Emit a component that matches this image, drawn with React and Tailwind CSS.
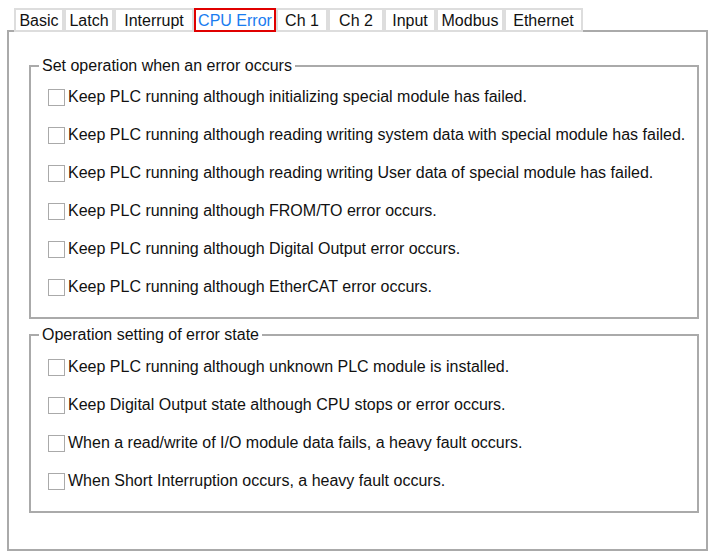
import React from 'react';

const tabs = [
  { name: 'Basic', w: 'w-[50px]' },
  { name: 'Latch', w: 'w-[50px]' },
  { name: 'Interrupt', w: 'w-[80px]' },
  { name: 'CPU Error', w: 'w-[82px]', active: true },
  { name: 'Ch 1', w: 'w-[52px]' },
  { name: 'Ch 2', w: 'w-[56px]' },
  { name: 'Input', w: 'w-[52px]' },
  { name: 'Modbus', w: 'w-[68px]' },
  { name: 'Ethernet', w: 'w-[79px]' },
];

const errorOptions = [
  'Keep PLC running although initializing special module has failed.',
  'Keep PLC running although reading writing system data with special module has failed.',
  'Keep PLC running although reading writing User data of special module has failed.',
  'Keep PLC running although FROM/TO error occurs.',
  'Keep PLC running although Digital Output error occurs.',
  'Keep PLC running although EtherCAT error occurs.',
];

const stateOptions = [
  'Keep PLC running although unknown PLC module is installed.',
  'Keep Digital Output state although CPU stops or error occurs.',
  'When a read/write of I/O module data fails, a heavy fault occurs.',
  'When Short Interruption occurs, a heavy fault occurs.',
];

const OptionRow = ({ label }) => (
  <label className="flex h-[38px] items-center">
    <span className="ml-[17px] mr-[3px] h-[17px] w-[17px] border-[1.5px] border-[#aaaaaa] bg-white" />
    <span className="whitespace-nowrap">{label}</span>
  </label>
);

const Group = ({ title, options, className }) => (
  <fieldset className={`w-[670px] border-2 border-[#aaaaaa] px-0 pb-[11px] ${className}`}>
    <legend className="ml-[8px] px-[3px] leading-[18px]">{title}</legend>
    {options.map((opt) => (
      <OptionRow key={opt} label={opt} />
    ))}
  </fieldset>
);

export default function App() {
  return (
    <div
      className="h-[558px] w-[714px] overflow-hidden bg-white text-[16px] text-[#111]"
      style={{ fontFamily: '"Liberation Sans", Arial, sans-serif' }}
    >
      <div className="relative z-10 flex pl-[14px] pt-[8px]">
        {tabs.map((tab) => (
          <div
            key={tab.name}
            className={
              tab.active
                ? `${tab.w} h-[24px] border-2 border-[#e00000] bg-white pt-[1px] text-center leading-[19px] text-[#1a7cf0]`
                : `${tab.w} h-[24px] border-2 border-[#dddddd] bg-white pt-[1px] text-center leading-[19px]`
            }
          >
            {tab.name}
          </div>
        ))}
      </div>
      <div className="-mt-[2px] ml-[7px] h-[521px] w-[701px] border-2 border-[#aaaaaa] pl-[20px] pt-[25px]">
        <Group title="Set operation when an error occurs" options={errorOptions} className="pt-[3px]" />
        <Group title="Operation setting of error state" options={stateOptions} className="mt-[7px] pt-[4px]" />
      </div>
    </div>
  );
}
